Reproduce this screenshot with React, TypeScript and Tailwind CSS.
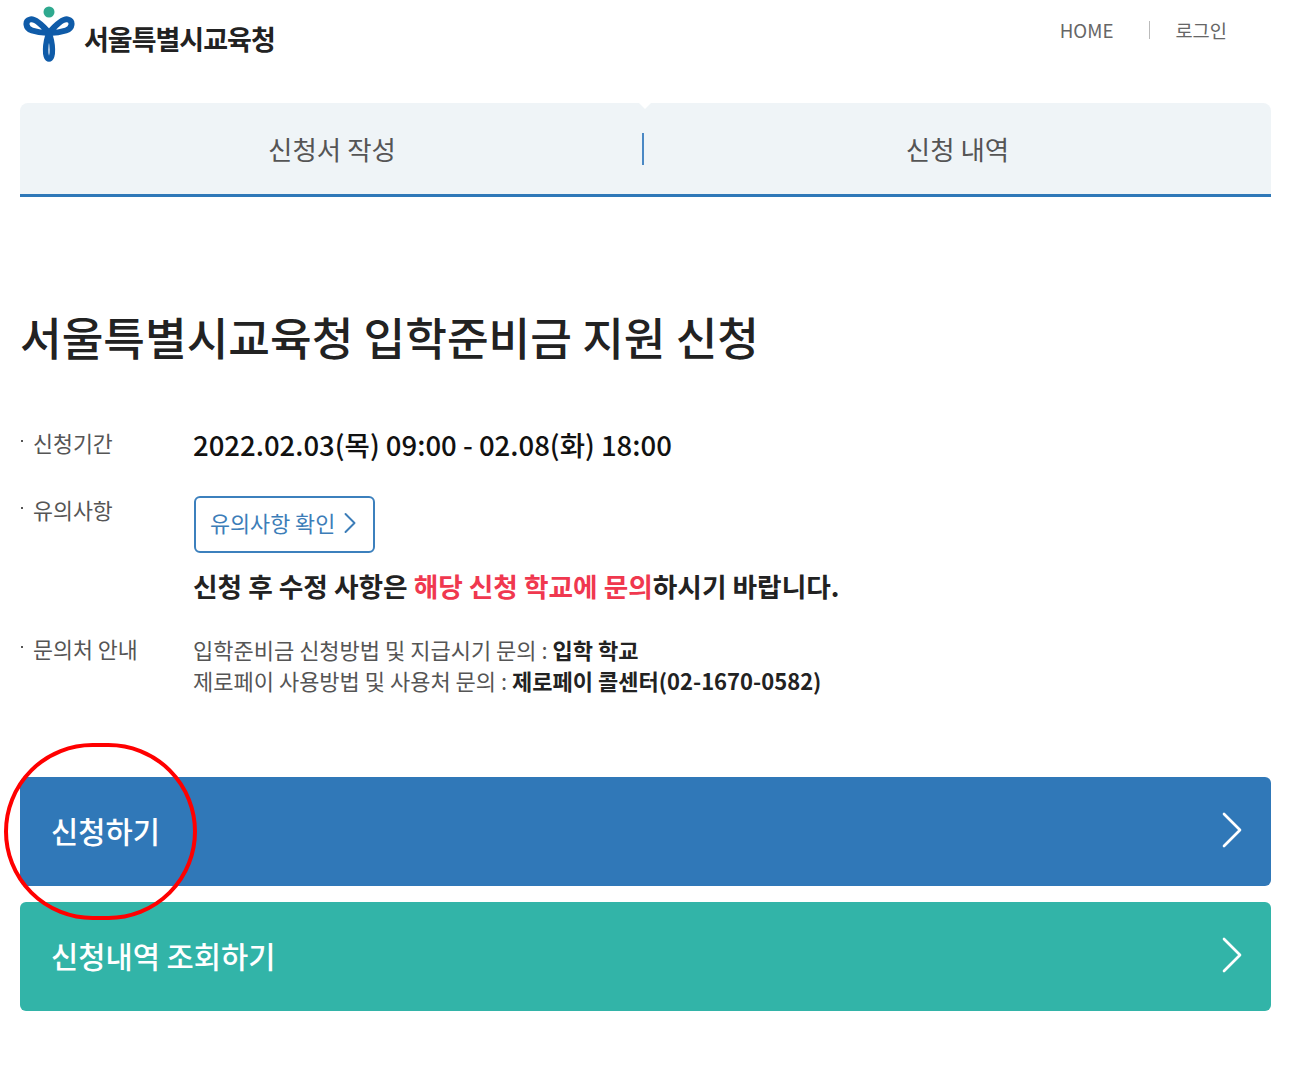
import { ChevronRight } from "lucide-react";

const FONT = "font-['Noto_Sans_CJK_KR','Noto_Sans',sans-serif]";

function Logo() {
  return (
    <svg width="54" height="60" viewBox="0 0 54 60" className="shrink-0">
      <circle cx="26" cy="8" r="5.5" fill="#2fa98f" />
      <path
        d="M26 29 C20 22 12 14 7 15.5 C2 17 2 24 9 26.5 C15 28.5 21 29 26 29 C31 29 37 28.5 43 26.5 C50 24 50 17 45 15.5 C40 14 32 22 26 29 Z"
        fill="none"
        stroke="#0f5ba8"
        strokeWidth="6"
        strokeLinejoin="round"
      />
      <path
        d="M26 29 C22 38 21 55 26 55 C31 55 30 38 26 29 Z"
        fill="none"
        stroke="#0f5ba8"
        strokeWidth="5.5"
        strokeLinejoin="round"
      />
    </svg>
  );
}

function InfoRow({ label, className, children }: { label: string; className?: string; children: React.ReactNode }) {
  return (
    <div className={`flex ${className ?? ""}`}>
      <div className="flex w-[173px] shrink-0 text-[21.7px] leading-[27px] text-[#555]">
        <span className="ml-[1px] mr-[10px] mt-[11px] h-[2px] w-[2px] bg-[#555]" />
        {label}
      </div>
      <div>{children}</div>
    </div>
  );
}

function BigButton({ label, color }: { label: string; color: string }) {
  return (
    <button
      type="button"
      className={`flex h-[109px] w-full items-center justify-between rounded-[6px] pl-[31px] pr-[7px] text-[29.6px] font-medium text-white ${color}`}
    >
      {label}
      <ChevronRight className="mb-[3px] h-[64px] w-[64px]" strokeWidth={1} />
    </button>
  );
}

export default function App() {
  return (
    <div className={`relative min-h-[1072px] bg-white pl-[20px] pr-[28px] ${FONT}`}>
      {/* Header */}
      <header className="flex h-[103px] items-start justify-between">
        <div className="flex items-start pl-[3px] pt-[4px]">
          <Logo />
          <span className="ml-[7px] mt-[17px] text-[27px] font-bold leading-[36px] tracking-[-1px] text-[#222]">
            서울특별시교육청
          </span>
        </div>
        <div className="flex items-center pr-[44px] pt-[15px] text-[18.7px] leading-[30px] text-[#666]">
          <span>HOME</span>
          <span className="ml-[36px] mr-[25px] h-[18px] w-px bg-[#bbb]" />
          <span>로그인</span>
        </div>
      </header>

      {/* Tabs */}
      <nav className="relative flex h-[94px] items-center rounded-t-[8px] border-b-[3px] border-[#2f78b8] bg-[#eff4f7] text-[26.5px] text-[#555]">
        <div className="w-[622px] pl-[2px] text-center">신청서 작성</div>
        <div className="h-[32px] w-[2px] bg-[#4a88c4]" />
        <div className="flex-1 text-center">신청 내역</div>
        <div className="absolute left-[619px] top-0 h-0 w-0 border-x-[6px] border-t-[6px] border-x-transparent border-t-white" />
      </nav>

      {/* Title */}
      <h1 className="mt-[107px] text-[45.3px] font-medium leading-[64px] text-[#222]">
        서울특별시교육청 입학준비금 지원 신청
      </h1>

      {/* Info */}
      <div className="mt-[61px]">
        <InfoRow label="신청기간">
          <div className="text-[27.5px] font-medium leading-[30px] text-[#111]">
            2022.02.03(목) 09:00 - 02.08(화) 18:00
          </div>
        </InfoRow>
        <InfoRow label="유의사항" className="mt-[37px]">
          <a className="ml-[1px] flex h-[57px] w-[181px] items-center rounded-[6px] border-2 border-[#3c80bd] pb-[3px] pl-[14px] text-[21.8px] text-[#3c7db8]">
            유의사항 확인
            <ChevronRight className="-ml-[3px] h-[36px] w-[36px] shrink-0" strokeWidth={1.3} />
          </a>
          <p className="mt-[13px] text-[26.7px] font-bold leading-[40px] text-[#222]">
            신청 후 수정 사항은 <span className="text-[#f0384f]">해당 신청 학교에 문의</span>하시기 바랍니다.
          </p>
        </InfoRow>
        <InfoRow label="문의처 안내" className="mt-[29px]">
          <div className="-mt-px text-[22px] leading-[31px] text-[#555]">
            <p>
              입학준비금 신청방법 및 지급시기 문의 : <b className="text-[#222]">입학 학교</b>
            </p>
            <p>
              제로페이 사용방법 및 사용처 문의 : <b className="text-[#222]">제로페이 콜센터(02-1670-0582)</b>
            </p>
          </div>
        </InfoRow>
      </div>

      {/* Buttons */}
      <div className="mt-[81px] flex flex-col gap-[16px]">
        <BigButton label="신청하기" color="bg-[#3078b8]" />
        <BigButton label="신청내역 조회하기" color="bg-[#32b4a8]" />
      </div>

      {/* Red annotation circle */}
      <div className="pointer-events-none absolute left-[4px] top-[743px] h-[177px] w-[193px] rounded-full border-4 border-[#f00]" />
    </div>
  );
}
